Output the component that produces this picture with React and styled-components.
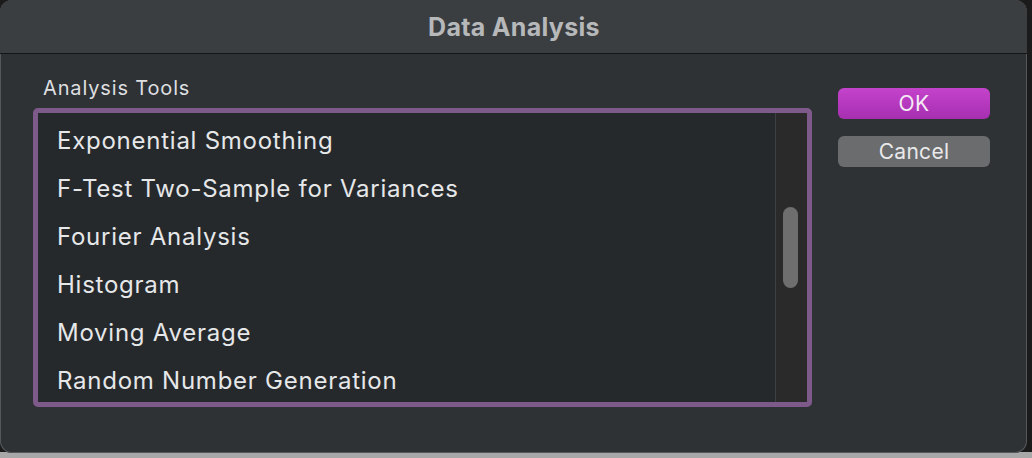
import React from 'react'
import styled, { createGlobalStyle } from 'styled-components'

const Global = createGlobalStyle`
  html, body {
    margin: 0;
    padding: 0;
    background: #1b1b1b;
  }
  body {
    font-family: Inter, "Liberation Sans", sans-serif;
    width: 1032px;
    height: 458px;
    overflow: hidden;
    background: linear-gradient(to bottom, #1b1b1b 0, #1b1b1b 452px, #a8a8a8 452px);
  }
`

const Window = styled.div`
  width: 1027px;
  height: 453px;
  box-sizing: border-box;
  border-radius: 12px;
  background: #2e3235;
  overflow: hidden;
  display: flex;
  flex-direction: column;
  box-shadow: inset 0 0 0 1px #55585b;
`

const TitleBar = styled.div`
  height: 53px;
  flex: none;
  background: #3b3e41;
  border-bottom: 1px solid #141516;
  display: flex;
  align-items: center;
  justify-content: center;
  color: #b6b8ba;
  font-weight: 700;
  font-size: 25px;
  letter-spacing: 0.3px;
  padding-left: 1px;
`

const Body = styled.div`
  flex: 1;
  display: flex;
  padding: 22px 0 0 33px;
`

const LeftCol = styled.div`
  width: 779px;
  display: flex;
  flex-direction: column;
`

const Label = styled.div`
  font-size: 20px;
  letter-spacing: 0.85px;
  color: #dedfe0;
  padding-left: 10px;
  height: 32px;
  line-height: 24px;
`

const ListBox = styled.div`
  height: 299px;
  box-sizing: border-box;
  border: 5px solid #7e5a8b;
  border-radius: 5px;
  background: #25292c;
  display: flex;
  overflow: hidden;
`

const Items = styled.ul`
  flex: 1;
  margin: 0;
  padding: 4px 0 0 19px;
  list-style: none;
`

const Item = styled.li`
  height: 48px;
  line-height: 48px;
  font-size: 24px;
  letter-spacing: 0.75px;
  color: #e6e7e8;
`

const Track = styled.div`
  width: 31px;
  flex: none;
  background: #2a2a2b;
  border-left: 1px solid #3d3f41;
  position: relative;
`

const Thumb = styled.div`
  position: absolute;
  left: 7px;
  top: 94px;
  width: 15px;
  height: 81px;
  border-radius: 8px;
  background: #6e6e6e;
`

const Buttons = styled.div`
  display: flex;
  flex-direction: column;
  gap: 17px;
  margin-left: 26px;
  padding-top: 12px;
`

const Button = styled.button`
  width: 152px;
  height: 31px;
  border: none;
  border-radius: 6px;
  font-family: Inter, "Liberation Sans", sans-serif;
  font-size: 21px;
  letter-spacing: 0.3px;
  color: ${p => (p.$primary ? '#f4eaf5' : '#e9e9ea')};
  background: ${p =>
    p.$primary ? 'linear-gradient(to bottom, #c443cb, #a62fb1)' : '#6a6c6e'};
  padding: 0;
  line-height: 31px;
`

const tools = [
  'Exponential Smoothing',
  'F-Test Two-Sample for Variances',
  'Fourier Analysis',
  'Histogram',
  'Moving Average',
  'Random Number Generation',
]

export default function App() {
  return (
    <>
      <Global />
      <Window>
        <TitleBar>Data Analysis</TitleBar>
        <Body>
          <LeftCol>
            <Label>Analysis Tools</Label>
            <ListBox>
              <Items>
                {tools.map(t => (
                  <Item key={t}>{t}</Item>
                ))}
              </Items>
              <Track>
                <Thumb />
              </Track>
            </ListBox>
          </LeftCol>
          <Buttons>
            <Button $primary>OK</Button>
            <Button>Cancel</Button>
          </Buttons>
        </Body>
      </Window>
    </>
  )
}
